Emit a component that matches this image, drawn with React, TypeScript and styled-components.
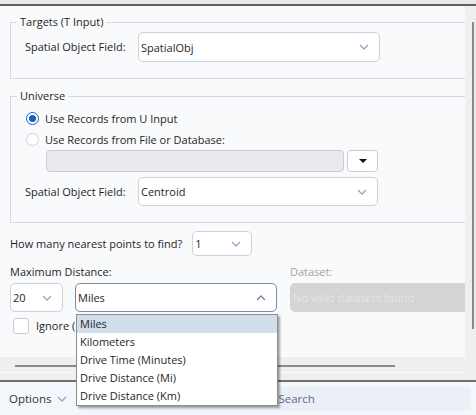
import React from "react";
import styled, { createGlobalStyle } from "styled-components";

const Global = createGlobalStyle`
  html, body { margin: 0; padding: 0; background: #efefef; }
  body { font-family: "Open Sans", "Noto Sans", sans-serif; font-size: 11px; color: #1f1f1f; }
  * { box-sizing: border-box; }
`;

const Root = styled.div`
  position: relative;
  width: 476px;
  height: 415px;
  display: flex;
  flex-direction: column;
  overflow: hidden;
`;

const TopStrip = styled.div`
  height: 6px;
  background: #e8e8e8;
  border-bottom: 2px solid #5e5e5e;
`;

const ScrollArea = styled.div`
  height: 376px;
  display: flex;
  border-bottom: 2px solid #6e6e6e;
`;

const ContentCol = styled.div`
  width: 465px;
  display: flex;
  flex-direction: column;
  background: #efefef;
`;

const Panel = styled.div`
  height: 351px;
  background: #f9fafc;
  overflow: hidden;
  padding-top: 8px;
`;

const HTrack = styled.div`
  height: 16px;
  padding-top: 8px;
  border-bottom: 1px solid #fafafa;
`;

const HThumb = styled.div`
  margin-left: 15px;
  width: 380px;
  height: 2px;
  background: #8a8a8a;
`;

const VTrack = styled.div`
  width: 11px;
  background: #efefef;
  padding-top: 16px;
`;

const VThumb = styled.div`
  margin-left: 7px;
  width: 2px;
  height: 307px;
  background: #8a8a8a;
`;

const Group = styled.fieldset<{ $mt?: number }>`
  margin: ${(p) => p.$mt ?? 0}px 0 0 10px;
  width: 470px;
  border: 1px solid #d6dae0;
  border-right: none;
  padding: 2px 0 16px 6px;
  min-width: 0;
`;

const Legend = styled.legend`
  padding: 0 3px;
  line-height: 16px;
  font-size: 11px;
  color: #1f1f1f;
`;

const FieldRow = styled.div<{ $mt?: number }>`
  display: grid;
  grid-template-columns: 113px auto;
  align-items: center;
  margin: ${(p) => p.$mt ?? 0}px 0 0 8px;
`;

const Label = styled.span<{ $disabled?: boolean }>`
  line-height: 16px;
  white-space: nowrap;
  color: ${(p) => (p.$disabled ? "#a3a3a3" : "#1f1f1f")};
`;

const ClippedLabel = styled(Label)`
  display: block;
  width: 40px;
  overflow: hidden;
`;

const SelectBox = styled.div<{ $w: number; $h: number; $focused?: boolean }>`
  flex: none;
  width: ${(p) => p.$w}px;
  height: ${(p) => p.$h}px;
  background: #ffffff;
  border: 1px solid ${(p) => (p.$focused ? "#7d8aa3" : "#c8d1de")};
  border-radius: 5px;
  display: flex;
  align-items: center;
  justify-content: space-between;
  padding: 0 10px 0 2px;
  white-space: nowrap;
`;

const Chevron = ({ up }: { up?: boolean }) => (
  <svg width="10" height="6" viewBox="0 0 10 6" style={{ flex: "none" }}>
    <path
      d={up ? "M1 5 L5 1 L9 5" : "M1 1 L5 5 L9 1"}
      fill="none"
      stroke={up ? "#6f83a6" : "#98a6bd"}
      strokeWidth="1.3"
    />
  </svg>
);

const RadioRow = styled.div<{ $mt?: number }>`
  display: flex;
  align-items: center;
  gap: 6px;
  height: 21px;
  margin: ${(p) => p.$mt ?? 0}px 0 0 9px;
`;

const RadioCircle = styled.span<{ $on?: boolean }>`
  width: 13px;
  height: 13px;
  border-radius: 50%;
  background: #ffffff;
  border: ${(p) => (p.$on ? "1.5px solid #1560bd" : "1px solid #cad2de")};
  display: flex;
  align-items: center;
  justify-content: center;
  &::after {
    content: "";
    display: ${(p) => (p.$on ? "block" : "none")};
    width: 7px;
    height: 7px;
    border-radius: 50%;
    background: #1560bd;
  }
`;

const FileRow = styled.div`
  display: flex;
  gap: 3px;
  margin: 0 0 0 29px;
`;

const DisabledInput = styled.div`
  width: 298px;
  height: 22px;
  background: #e9eaed;
  border: 1px solid #c9ccd1;
  border-radius: 4px;
`;

const SmallButton = styled.div`
  width: 31px;
  height: 22px;
  background: #ffffff;
  border: 1px solid #c9ccd1;
  border-radius: 4px;
  display: flex;
  align-items: center;
  justify-content: center;
  &::after {
    content: "";
    border-left: 4px solid transparent;
    border-right: 4px solid transparent;
    border-top: 4px solid #111;
  }
`;

const InlineRow = styled.div<{ $mt?: number; $ml?: number; $gap: number }>`
  display: flex;
  align-items: center;
  gap: ${(p) => p.$gap}px;
  margin: ${(p) => p.$mt ?? 0}px 0 0 ${(p) => p.$ml ?? 10}px;
`;

const Columns = styled.div`
  display: flex;
  gap: 13px;
  margin: 8px 0 0 10px;
`;

const Col = styled.div`
  flex: none;
  display: flex;
  flex-direction: column;
  gap: 3px;
`;

const DatasetBox = styled.div`
  flex: none;
  width: 200px;
  height: 29px;
  background: #d4d4d4;
  border-radius: 5px;
  color: #e4e4e4;
  display: flex;
  align-items: center;
  padding-left: 3px;
  white-space: nowrap;
`;

const CheckRow = styled.div`
  display: flex;
  align-items: center;
  gap: 7px;
  margin: 6px 0 0 13px;
`;

const CheckBox = styled.span`
  width: 16px;
  height: 16px;
  border: 1px solid #c6ccd6;
  border-radius: 3px;
  background: #ffffff;
`;

const BottomBar = styled.div`
  flex: 1;
  background: #f3f6fa;
  display: flex;
  align-items: center;
  padding: 0 5px 0 9px;
  gap: 14px;
`;

const OptionsBtn = styled.div`
  display: flex;
  align-items: center;
  gap: 6px;
  color: #333;
  font-size: 11.5px;
`;

const SearchBox = styled.div`
  flex: 1;
  height: 24px;
  background: #ebf0f7;
  border-radius: 4px;
  display: flex;
  align-items: center;
  padding-left: 197px;
  color: #5a6b8c;
  font-size: 11.5px;
`;

const Dropdown = styled.div`
  position: absolute;
  left: 76px;
  top: 314px;
  width: 202px;
  background: #ffffff;
  border: 1px solid #8c8c8c;
  box-shadow: 2px 2px 2px rgba(0, 0, 0, 0.35);
  z-index: 10;
`;

const Item = styled.div<{ $active?: boolean }>`
  height: 18px;
  line-height: 18px;
  padding-left: 3px;
  background: ${(p) => (p.$active ? "#cfdeea" : "transparent")};
  color: #1f1f1f;
`;

const units = ["Miles", "Kilometers", "Drive Time (Minutes)", "Drive Distance (Mi)", "Drive Distance (Km)"];

export default function App() {
  return (
    <Root>
      <Global />
      <TopStrip />
      <ScrollArea>
        <ContentCol>
          <Panel>
            <Group>
              <Legend>Targets (T Input)</Legend>
              <FieldRow>
                <Label>Spatial Object Field:</Label>
                <SelectBox $w={242} $h={30}>
                  <span>SpatialObj</span>
                  <Chevron />
                </SelectBox>
              </FieldRow>
            </Group>
            <Group $mt={9}>
              <Legend>Universe</Legend>
              <RadioRow $mt={2}>
                <RadioCircle $on />
                <Label>Use Records from U Input</Label>
              </RadioRow>
              <RadioRow>
                <RadioCircle />
                <Label>Use Records from File or Database:</Label>
              </RadioRow>
              <FileRow>
                <DisabledInput />
                <SmallButton />
              </FileRow>
              <FieldRow $mt={5}>
                <Label>Spatial Object Field:</Label>
                <SelectBox $w={240} $h={29}>
                  <span>Centroid</span>
                  <Chevron />
                </SelectBox>
              </FieldRow>
            </Group>
            <InlineRow $mt={8} $gap={10}>
              <Label>How many nearest points to find?</Label>
              <SelectBox $w={60} $h={25}>
                <span>1</span>
                <Chevron />
              </SelectBox>
            </InlineRow>
            <Columns>
              <Col>
                <Label>Maximum Distance:</Label>
                <InlineRow $gap={12} $ml={0}>
                  <SelectBox $w={53} $h={29}>
                    <span>20</span>
                    <Chevron />
                  </SelectBox>
                  <SelectBox $w={202} $h={29} $focused>
                    <span>Miles</span>
                    <Chevron up />
                  </SelectBox>
                </InlineRow>
              </Col>
              <Col>
                <Label $disabled>Dataset:</Label>
                <DatasetBox>No valid datasets found</DatasetBox>
              </Col>
            </Columns>
            <CheckRow>
              <CheckBox />
              <ClippedLabel>Ignore (</ClippedLabel>
            </CheckRow>
          </Panel>
          <HTrack>
            <HThumb />
          </HTrack>
        </ContentCol>
        <VTrack>
          <VThumb />
        </VTrack>
      </ScrollArea>
      <BottomBar>
        <OptionsBtn>
          Options
          <Chevron />
        </OptionsBtn>
        <SearchBox>Search</SearchBox>
      </BottomBar>
      <Dropdown>
        {units.map((u, i) => (
          <Item key={u} $active={i === 0}>
            {u}
          </Item>
        ))}
      </Dropdown>
    </Root>
  );
}
